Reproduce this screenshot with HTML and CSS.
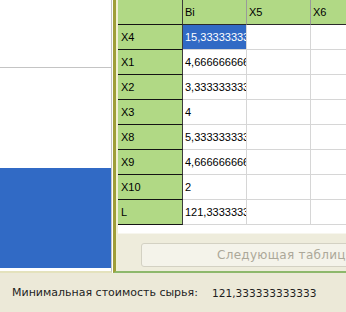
FILE: index.html
```html
<!DOCTYPE html>
<html lang="ru">
<head>
<meta charset="utf-8">
<title>Таблица</title>
<link rel="stylesheet" href="styles.css">
</head>
<body>
<div class="app">
  <div class="main">
    <div class="left">
      <div class="left-top"></div>
      <div class="left-mid"></div>
      <div class="left-blue"></div>
      <div class="left-bot"></div>
    </div>
    <div class="right">
      <div class="frame">
        <div class="grid-wrap">
          <div class="grid">
            <div class="cell rh"></div>
            <div class="cell ch">Bi</div>
            <div class="cell ch">X5</div>
            <div class="cell ch">X6</div>

            <div class="cell rh">X4</div>
            <div class="cell sel">15,3333333333</div>
            <div class="cell"></div>
            <div class="cell"></div>

            <div class="cell rh">X1</div>
            <div class="cell">4,66666666667</div>
            <div class="cell"></div>
            <div class="cell"></div>

            <div class="cell rh">X2</div>
            <div class="cell">3,33333333333</div>
            <div class="cell"></div>
            <div class="cell"></div>

            <div class="cell rh">X3</div>
            <div class="cell">4</div>
            <div class="cell"></div>
            <div class="cell"></div>

            <div class="cell rh">X8</div>
            <div class="cell">5,33333333333</div>
            <div class="cell"></div>
            <div class="cell"></div>

            <div class="cell rh">X9</div>
            <div class="cell">4,66666666667</div>
            <div class="cell"></div>
            <div class="cell"></div>

            <div class="cell rh">X10</div>
            <div class="cell">2</div>
            <div class="cell"></div>
            <div class="cell"></div>

            <div class="cell rh">L</div>
            <div class="cell">121,333333333</div>
            <div class="cell"></div>
            <div class="cell"></div>
          </div>
        </div>
        <div class="btn-area">
          <button class="next" disabled>Следующая таблица</button>
        </div>
      </div>
    </div>
  </div>
  <div class="status">
    <span class="label">Минимальная стоимость сырья:</span>
    <span class="value">121,333333333333</span>
  </div>
</div>
</body>
</html>
```

FILE: styles.css
```css
html, body {
  margin: 0;
  padding: 0;
}
body {
  width: 346px;
  height: 312px;
  overflow: hidden;
  background: #ece9d8;
  font-family: "DejaVu Sans", Verdana, sans-serif;
}
.app {
  width: 346px;
  height: 312px;
  display: flex;
  flex-direction: column;
}
.main {
  height: 273px;
  display: flex;
  flex: none;
}
.left {
  width: 111px;
  flex: none;
  display: flex;
  flex-direction: column;
  background: #fff;
  border-right: 1px solid #c4c4c4;
  border-bottom: 2px solid #e4e2bd;
}
.left-top {
  height: 67px;
  border-bottom: 1px solid #c4c4c4;
  flex: none;
}
.left-mid {
  flex: 1;
}
.left-blue {
  height: 100px;
  flex: none;
  background: #316ac5;
}
.left-bot {
  height: 3px;
  flex: none;
}
.right {
  flex: 1;
  min-width: 0;
  background: #fff;
  padding-left: 1px;
}
.frame {
  height: 271px;
  display: flex;
  flex-direction: column;
  border-left: 3px solid #9f9e38;
  border-bottom: 2px solid #8db86c;
  padding-left: 2px;
  background: #f1f0d4;
  overflow: hidden;
}
.grid-wrap {
  height: 233px;
  flex: none;
  background: #fff;
  overflow: hidden;
}
.grid {
  display: grid;
  grid-template-columns: 65px 64px 64px 64px;
  grid-template-rows: 25px repeat(8, 25px);
  width: 257px;
  font-family: "Liberation Sans", Arial, sans-serif;
  font-size: 11px;
  color: #000;
}
.cell {
  box-sizing: border-box;
  border-right: 1px solid #d6d6d6;
  border-bottom: 1px solid #d6d6d6;
  padding-left: 2px;
  display: flex;
  align-items: center;
  white-space: nowrap;
  overflow: hidden;
}
.rh {
  background: #b1d985;
  border-right: 1px solid #3c3c3c;
  border-bottom: 1px solid #141414;
  padding-left: 3px;
}
.ch {
  background: #b1d985;
  border-right: 1px solid #9a9a9a;
  border-bottom: 1px solid #2a2a2a;
  padding-left: 2px;
}
.sel {
  background: #316ac5;
  color: #fff;
}
.btn-area {
  flex: 1;
  background: #eeecdc;
  border-top: 1px solid #f7f6ee;
  padding-top: 9px;
  padding-left: 23px;
}
.next {
  display: block;
  width: 300px;
  height: 24px;
  margin: 0;
  box-sizing: border-box;
  border: 1px solid #d3d1c3;
  border-radius: 3px;
  background: #f4f3ea;
  color: #aca899;
  font-family: "DejaVu Sans", Verdana, sans-serif;
  font-size: 12px;
  letter-spacing: 0.3px;
  text-align: left;
  padding: 0 0 0 75px;
  white-space: nowrap;
}
.status {
  flex: 1;
  display: flex;
  align-items: center;
  padding-left: 12px;
  color: #1e1e1e;
}
.label {
  width: 200px;
  flex: none;
  font-size: 11px;
}
.value {
  font-size: 10.6px;
}
```
